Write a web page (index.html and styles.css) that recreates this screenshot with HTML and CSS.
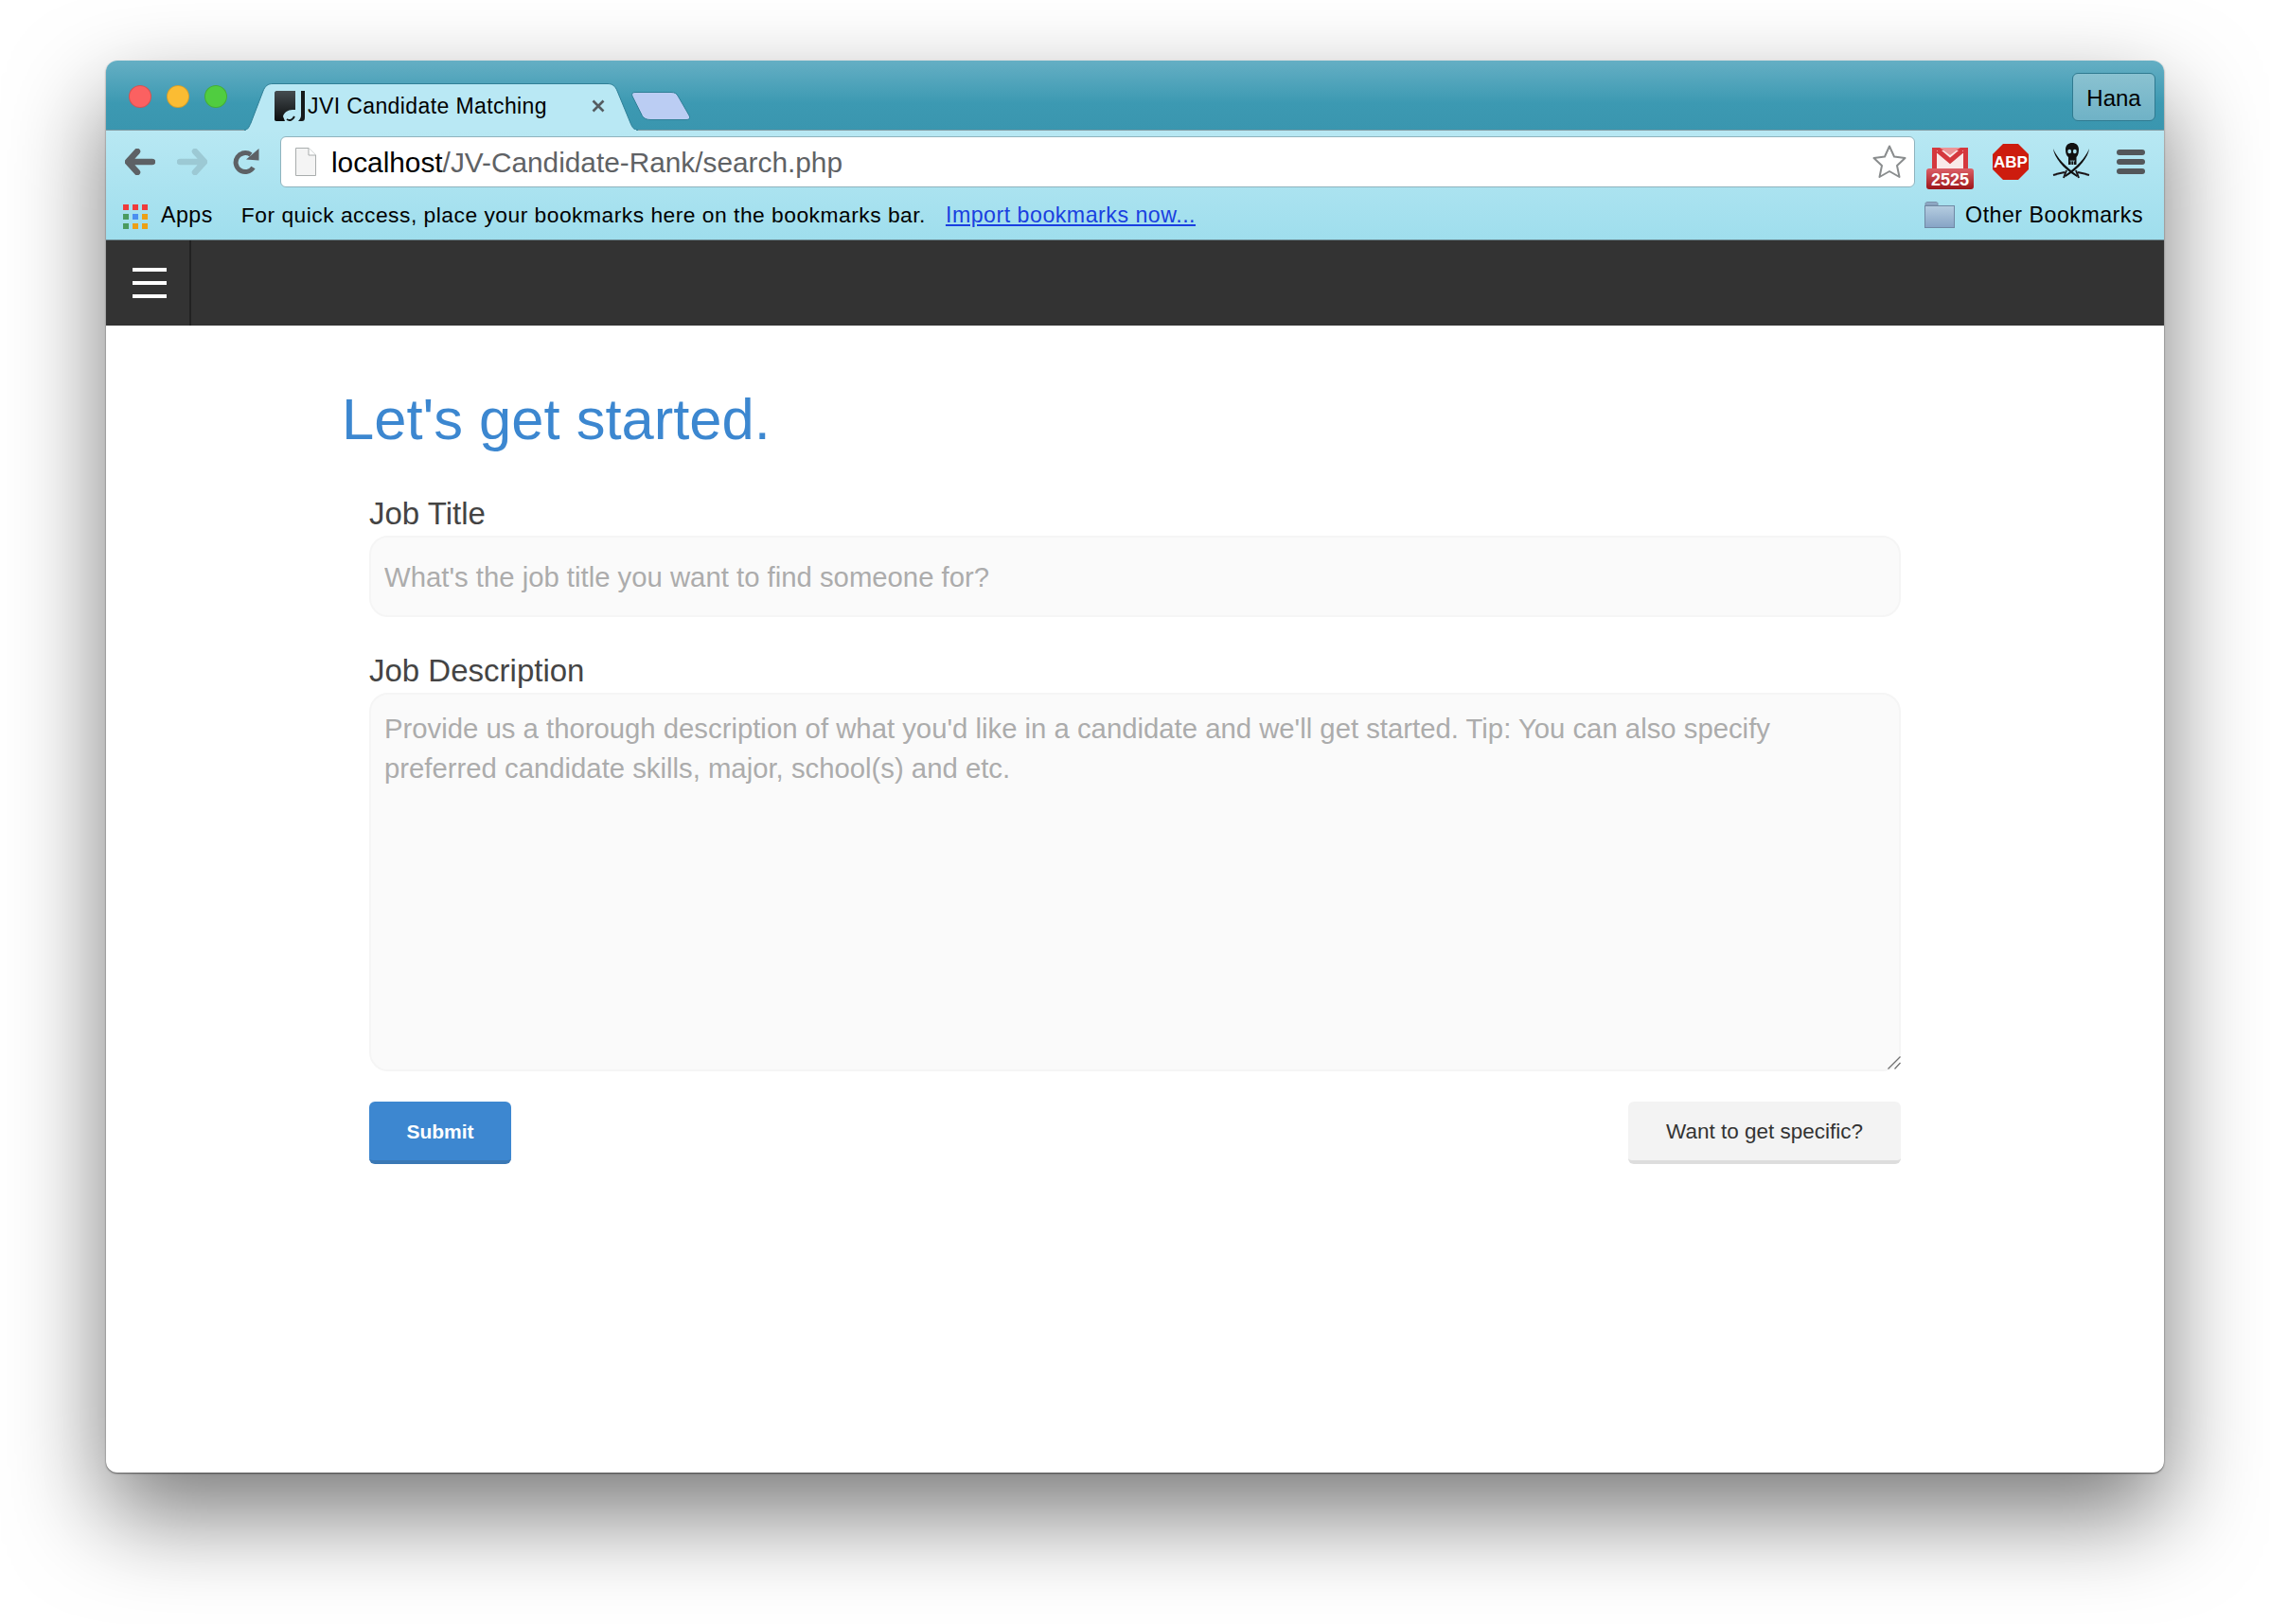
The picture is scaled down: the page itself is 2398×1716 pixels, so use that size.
FILE: index.html
```html
<!DOCTYPE html>
<html lang="en">
<head>
    <meta charset="UTF-8">
    <meta name="viewport" content="width=device-width, initial-scale=1.0">
    <title>JVI Candidate Matching</title>
    <link rel="stylesheet" href="styles.css">
</head>
<body>
    <div class="window">
        <div class="titlebar">
            <div class="lights">
                <span class="light red"></span>
                <span class="light yellow"></span>
                <span class="light green"></span>
            </div>
            <div class="tab">
                <svg class="tab-bg" viewBox="0 0 416 50" preserveAspectRatio="none">
                    <path d="M0 49.500C4 49.500 5 46 7 42L20 8C22 3 25 .5 30 .5H384C389 .5 392 3 394 8L408 42C410 47 412 49.500 416 49.500" fill="#b9e8f4" stroke="#2f7f96" stroke-width="1"/>
                    <path d="M2 50H414" stroke="#b8e8f3" stroke-width="2"/>
                </svg>
                <svg class="favicon" viewBox="0 0 32 32">
                    <defs>
                        <linearGradient id="fav" x1="0" y1="0" x2="0" y2="1">
                            <stop offset="0" stop-color="#454c50"/>
                            <stop offset="1" stop-color="#0c0e0f"/>
                        </linearGradient>
                    </defs>
                    <path d="M2 0H22V20H19C14 20 10 23 9 27L11 32H2C.5 32 0 31 0 30V2C0 1 1 0 2 0Z" fill="url(#fav)"/>
                    <path d="M28 0H32V28C32 31 31 32 29 32H25C27 30 28 28 28 26Z" fill="#15191a"/>
                    <path d="M13 30C16 32 19 31 21 27" fill="none" stroke="#15191a" stroke-width="2"/>
                </svg>
                <span class="tab-title">JVI Candidate Matching</span>
                <svg class="tab-close" viewBox="0 0 14 14">
                    <path d="M1.500 1.500L12.500 12.500M12.500 1.500L1.500 12.500" stroke="#555c60" stroke-width="2.600"/>
                </svg>
            </div>
            <svg class="newtab" viewBox="0 0 62 30">
                <path d="M.7 4C.3 1.500 1.500 .5 4 .5H42C46 .5 48 2 49.500 5L61 25C62.500 28 61 29.500 58 29.500H20C16 29.500 13 28 11.500 25.500Z" fill="#bbcdf3" stroke="#2f7f96"/>
            </svg>
            <div class="profile">Hana</div>
        </div>

        <div class="bars">
            <div class="toolbar">
                <svg class="nav-icon" viewBox="0 0 32 28">
                    <path d="M13 3L3 14L13 25M4 14H29" fill="none" stroke="#5d6165" stroke-width="6.500" stroke-linecap="round" stroke-linejoin="round"/>
                </svg>
                <svg class="nav-icon forward" viewBox="0 0 32 28">
                    <path d="M19 3L29 14L19 25M28 14H3" fill="none" stroke="#9cc9d4" stroke-width="6.500" stroke-linecap="round" stroke-linejoin="round"/>
                </svg>
                <svg class="nav-icon reload" viewBox="0 0 28 28">
                    <path d="M21.500 20A10 10 0 1 1 19 6.500" fill="none" stroke="#5d6165" stroke-width="5"/>
                    <path d="M14 11.500L27.500 0V12.500Z" fill="#5d6165"/>
                </svg>
                <div class="omnibox">
                    <svg class="page-icon" viewBox="0 0 22 30">
                        <path d="M.5 .5H14L21.500 8V29.500H.5Z" fill="#f4f4f4" stroke="#a9adad"/>
                        <path d="M14 .5V8H21.500" fill="#fff" stroke="#a9adad"/>
                    </svg>
                    <span class="url"><span class="url-host">localhost</span>/JV-Candidate-Rank/search.php</span>
                    <svg class="star" viewBox="0 0 36 36">
                        <path d="M18 1.500L23 12.500L34.500 14L26 22L28.500 34L18 28L7.500 34L10 22L1.500 14L13 12.500Z" fill="#fff" stroke="#8a8d8e" stroke-width="2" stroke-linejoin="round"/>
                    </svg>
                </div>
                <svg class="gmail" viewBox="0 0 50 44">
                    <defs>
                        <linearGradient id="badge" x1="0" y1="0" x2="0" y2="1">
                            <stop offset="0" stop-color="#dd6068"/>
                            <stop offset="1" stop-color="#9c1519"/>
                        </linearGradient>
                    </defs>
                    <rect x="6" y="0" width="38" height="24" fill="#d5383e"/>
                    <rect x="11" y="3" width="28" height="20" fill="#f9e9e9"/>
                    <path d="M12 3L25 14L38 3" fill="none" stroke="#d5383e" stroke-width="5"/>
                    <path d="M14 0H36L25 8Z" fill="#ec9496"/>
                    <rect x="0" y="22" width="50" height="22" rx="3" fill="url(#badge)"/>
                    <text x="25" y="39.500" text-anchor="middle" class="gmail-count">2525</text>
                </svg>
                <svg class="abp" viewBox="0 0 38 38">
                    <path d="M11 0H27L38 11V27L27 38H11L0 27V11Z" fill="#cd1c0e"/>
                    <text x="19" y="25" text-anchor="middle" class="abp-text">ABP</text>
                </svg>
                <svg class="pirate" viewBox="0 0 40 40">
                    <path d="M14 8C14 3.500 17 1 21 1C25 1 28 3.500 28 8C28 12 27 14.500 25.500 16V24H17V16C15 14.500 14 12 14 8Z" fill="#111"/>
                    <ellipse cx="18.200" cy="10" rx="1.900" ry="2.300" fill="#a9e0ec"/>
                    <ellipse cx="23.800" cy="10" rx="1.900" ry="2.300" fill="#a9e0ec"/>
                    <path d="M18.500 20H24M20 24V20M22.500 24V20" stroke="#a9e0ec" stroke-width=".7"/>
                    <path d="M1 7C2 16 11 28 26 37L27 35.500C14 26 5 17 1 7Z" fill="#111"/>
                    <path d="M39 7C38 16 29 28 14 37L13 35.500C26 26 35 17 39 7Z" fill="#111"/>
                    <path d="M4 34L13 32M36 34L27 32M12 38L15 30M28 38L25 30M1 35L5 34M39 35L35 34" fill="none" stroke="#1c1518" stroke-width="2"/>
                </svg>
                <div class="menu">
                    <span></span>
                    <span></span>
                    <span></span>
                </div>
            </div>
            <div class="bookmarks">
                <div class="apps-grid">
                    <span class="sq r"></span><span class="sq r"></span><span class="sq r"></span>
                    <span class="sq g"></span><span class="sq b"></span><span class="sq o"></span>
                    <span class="sq g"></span><span class="sq o"></span><span class="sq o"></span>
                </div>
                <span class="apps-label">Apps</span>
                <span class="bm-text">For quick access, place your bookmarks here on the bookmarks bar.</span>
                <a class="bm-link" href="#">Import bookmarks now...</a>
                <svg class="folder" viewBox="0 0 32 28">
                    <defs>
                        <linearGradient id="fold" x1="0" y1="0" x2="0" y2="1">
                            <stop offset="0" stop-color="#b5cde0"/>
                            <stop offset="1" stop-color="#86a3c5"/>
                        </linearGradient>
                    </defs>
                    <path d="M1 4V2C1 1 2 .5 3 .5H12C13 .5 14 1 14 2V4Z" fill="#8ea8c4" stroke="#7c93ab"/>
                    <rect x=".5" y="4.500" width="31" height="23" fill="url(#fold)" stroke="#7088a3"/>
                </svg>
                <span class="bm-other">Other Bookmarks</span>
            </div>
        </div>

        <div class="navbar">
            <div class="hamburger">
                <span></span>
                <span></span>
                <span></span>
            </div>
        </div>

        <div class="content">
            <h1 class="heading">Let's get started.</h1>
            <form class="search-form">
                <label class="field-label" for="job-title">Job Title</label>
                <input class="field field-input" type="text" id="job-title" placeholder="What's the job title you want to find someone for?">
                <label class="field-label second" for="job-desc">Job Description</label>
                <div class="area-wrap">
                    <textarea class="field field-area" id="job-desc" placeholder="Provide us a thorough description of what you'd like in a candidate and we'll get started. Tip: You can also specify preferred candidate skills, major, school(s) and etc."></textarea>
                    <svg class="grip" viewBox="0 0 14 14">
                        <path d="M.5 13.500L13.500 .5M7.500 13.500L13.500 7" fill="none" stroke="#707070" stroke-width="1.300"/>
                    </svg>
                </div>
                <div class="actions">
                    <button class="btn btn-primary" type="button">Submit</button>
                    <button class="btn btn-default" type="button">Want to get specific?</button>
                </div>
            </form>
        </div>
    </div>
</body>
</html>
```

FILE: styles.css
```css
html, body {
    margin: 0;
    height: 100%;
    background-color: #ffffff;
    overflow: hidden;
}
body {
    padding: 64px 0 0 112px;
    box-sizing: border-box;
    font-family: "Liberation Sans", Arial, sans-serif;
    color: #000000;
}
svg {
    display: block;
    flex: none;
}
.window {
    width: 2174px;
    height: 1492px;
    display: flex;
    flex-direction: column;
    background-color: #ffffff;
    border-radius: 12px;
    box-shadow: 0 44px 100px rgba(0, 0, 0, .53), 0 1px 2px rgba(0, 0, 0, .55);
    overflow: hidden;
}

/* title bar */
.titlebar {
    position: relative;
    height: 73px;
    flex: none;
    display: flex;
    background: linear-gradient(#65afc4, #3c99b2 62%, #3a96af);
    border-bottom: 1px solid #7f9aa2;
}
.lights {
    display: flex;
    gap: 16px;
    padding: 26px 0 0 24px;
}
.light {
    width: 24px;
    height: 24px;
    box-sizing: border-box;
    border-radius: 50%;
    border: 1px solid rgba(0, 0, 0, .15);
}
.red { background-color: #fb6161; }
.yellow { background-color: #fbbc33; }
.green { background-color: #50cd40; }
.tab {
    position: relative;
    width: 416px;
    height: 49px;
    margin: 24px 0 0 18px;
    display: flex;
    align-items: center;
    padding-left: 32px;
    box-sizing: border-box;
}
.tab-bg {
    position: absolute;
    left: 0;
    top: 0;
    width: 416px;
    height: 50px;
}
.favicon {
    position: relative;
    width: 32px;
    height: 32px;
    margin-top: -1px;
}
.tab-title {
    position: relative;
    margin-left: 3px;
    font-size: 23px;
    letter-spacing: .4px;
    white-space: nowrap;
}
.tab-close {
    position: absolute;
    left: 367px;
    top: 17px;
    width: 14px;
    height: 14px;
}
.newtab {
    width: 62px;
    height: 30px;
    margin: 33px 0 0 -7px;
}
.profile {
    margin: 13px 9px 0 auto;
    width: 88px;
    height: 51px;
    box-sizing: border-box;
    border: 1px solid #2f7a90;
    border-radius: 6px;
    background: linear-gradient(#8ac2d1, #6fb2c6);
    text-align: center;
    font-size: 24px;
    line-height: 51px;
}

/* toolbar + bookmarks */
.bars {
    flex: none;
    background: linear-gradient(#b8e8f3, #9fdeed);
    border-bottom: 1px solid #6f8b94;
}
.toolbar {
    height: 66px;
    display: flex;
    align-items: center;
    padding: 0 20px;
}
.nav-icon {
    width: 32px;
    height: 28px;
}
.forward {
    margin-left: 23px;
}
.reload {
    width: 28px;
    margin-left: 27px;
}
.omnibox {
    flex: 1;
    height: 54px;
    margin-left: 22px;
    display: flex;
    align-items: center;
    padding: 0 8px 0 15px;
    box-sizing: border-box;
    background-color: #ffffff;
    border: 1px solid #8fb3bd;
    border-radius: 6px;
}
.page-icon {
    width: 22px;
    height: 30px;
}
.url {
    margin: 2px 0 0 16px;
    font-size: 29.800px;
    color: #5f6265;
    white-space: nowrap;
}
.url-host {
    color: #000000;
}
.star {
    width: 36px;
    height: 36px;
    margin-left: auto;
}
.gmail {
    width: 50px;
    height: 44px;
    margin: 14px 0 0 12px;
}
.gmail-count {
    font-size: 18px;
    font-weight: bold;
    fill: #ffffff;
}
.abp {
    width: 38px;
    height: 38px;
    margin-left: 20px;
}
.abp-text {
    font-size: 17px;
    font-weight: bold;
    fill: #ffffff;
}
.pirate {
    width: 40px;
    height: 40px;
    margin: -2px 0 0 25px;
}
.menu {
    display: flex;
    flex-direction: column;
    gap: 4px;
    margin-left: 28px;
}
.menu span {
    display: block;
    width: 30px;
    height: 6px;
    border-radius: 3px;
    background-color: #53575a;
}
.bookmarks {
    height: 49px;
    display: flex;
    align-items: center;
    padding: 0 22px 3px 18px;
    box-sizing: border-box;
    font-size: 23.200px;
    letter-spacing: .5px;
    white-space: nowrap;
}
.apps-grid {
    display: grid;
    grid-template-columns: repeat(3, 6px);
    gap: 4px;
    margin-top: 3px;
}
.sq {
    width: 6px;
    height: 6px;
}
.r { background-color: #ee3b3b; }
.g { background-color: #4a9b60; }
.b { background-color: #4b8ff0; }
.o { background-color: #eca016; }
.apps-label {
    margin-left: 14px;
}
.bm-text {
    margin-left: 30px;
    font-size: 22.800px;
}
.bm-link {
    margin-left: 21px;
    color: #1a3fe0;
}
.folder {
    width: 32px;
    height: 28px;
    margin-left: auto;
}
.bm-other {
    margin-left: 11px;
}

/* dark nav */
.navbar {
    height: 90px;
    flex: none;
    display: flex;
    background-color: #333333;
}
.hamburger {
    width: 90px;
    box-sizing: border-box;
    display: flex;
    flex-direction: column;
    justify-content: center;
    gap: 10px;
    padding-left: 28px;
    border-right: 2px solid #222222;
}
.hamburger span {
    display: block;
    width: 36px;
    height: 4px;
    background-color: #ffffff;
}

/* page */
.content {
    flex: 1;
    padding: 66px 0 0 249px;
}
.heading {
    margin: 0 0 49px;
    font-size: 61.500px;
    line-height: 66px;
    font-weight: normal;
    color: #3c87d0;
}
.search-form {
    width: 1618px;
    margin-left: 29px;
}
.field-label {
    display: block;
    margin-bottom: 5px;
    font-size: 33px;
    line-height: 36px;
    color: #444444;
}
.second {
    margin-top: 39px;
    margin-bottom: 5px;
}
.field {
    display: block;
    width: 100%;
    box-sizing: border-box;
    border: 2px solid #f5f5f5;
    border-radius: 20px;
    background-color: #fafafa;
    font-family: inherit;
    font-size: 29.300px;
    color: #333333;
    outline: none;
}
.field::placeholder {
    color: #acacac;
    opacity: 1;
}
.field-input {
    height: 86px;
    padding: 2px 14px 0;
}
.field-area {
    height: 400px;
    padding: 15px 14px;
    line-height: 42px;
    resize: none;
}
.area-wrap {
    position: relative;
}
.grip {
    position: absolute;
    right: 0;
    bottom: 2px;
    width: 14px;
    height: 14px;
}
.actions {
    display: flex;
    justify-content: space-between;
    margin-top: 32px;
}
.btn {
    height: 66px;
    box-sizing: border-box;
    padding-top: 2px;
    border: none;
    border-radius: 6px;
    font-family: inherit;
    font-size: 22.500px;
}
.btn-primary {
    width: 150px;
    background-color: #3d87d0;
    border-bottom: 4px solid #3a78b5;
    color: #ffffff;
    font-size: 21px;
    font-weight: bold;
}
.btn-default {
    width: 288px;
    background-color: #f3f3f3;
    border-bottom: 4px solid #dddddd;
    color: #333333;
}
```
